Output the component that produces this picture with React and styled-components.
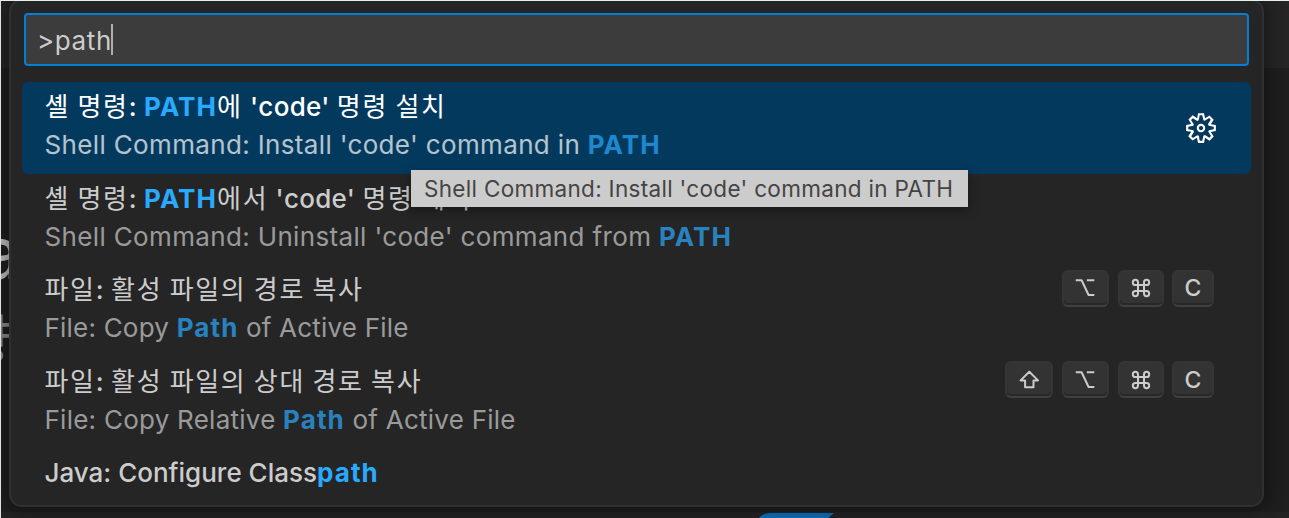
import React from 'react';
import styled, { createGlobalStyle } from 'styled-components';
import { VscGear } from 'react-icons/vsc';

const GlobalStyle = createGlobalStyle`
  * { box-sizing: border-box; }
  body { margin: 0; background: #1e1e1e; }
`;

const Workbench = styled.div`
  position: relative;
  width: 1289px;
  height: 518px;
  overflow: hidden;
  display: flex;
  flex-direction: column;
  border-top: 1px solid #e9eeee;
  border-left: 1px solid #dfe2e2;
  background: #1e1e1e;
  font-family: Inter, 'Noto Sans CJK KR', sans-serif;
  font-size: 26px;
  color: #ccc;
`;

const TabStrip = styled.div`
  height: 67px;
  background: #252526;
`;

const Editor = styled.div`
  flex: 1;
`;

const PanelEdge = styled.div`
  height: 6px;
  background: #232323;
`;

const Ribbon = styled.svg`
  position: absolute;
  left: 757px;
  top: 511px;
`;

const Behind = styled.span`
  position: absolute;
  left: ${(p) => p.$left}px;
  top: ${(p) => p.$top}px;
  font-size: ${(p) => p.$size}px;
  line-height: 1;
  color: ${(p) => p.$color};
`;

const Palette = styled.div`
  position: absolute;
  left: 8px;
  top: -2px;
  width: 1255px;
  height: 508px;
  padding: 12px 11px 0;
  display: flex;
  flex-direction: column;
  border: 2px solid #303031;
  border-radius: 13px;
  background: #252526;
  box-shadow: 0 0 16px 4px rgba(0, 0, 0, 0.36);
`;

const Query = styled.div`
  height: 53px;
  margin: 0 2px 16px;
  padding: 2px 0 0 11px;
  display: flex;
  align-items: center;
  border: 2px solid #007fd4;
  border-radius: 4px;
  background: #3c3c3c;
  letter-spacing: 0.6px;
`;

const Caret = styled.i`
  width: 2px;
  height: 31px;
  margin: -3px 0 0 -1px;
  background: #aeafad;
`;

const Row = styled.div`
  height: ${(p) => (p.$single ? 46 : 91.6)}px;
  padding: ${(p) => (p.$single ? 5.5 : 6)}px 37px 0 22.5px;
  display: flex;
  justify-content: space-between;
  border-radius: 6px;
  background: ${(p) => (p.$active ? '#04395e' : 'transparent')};
  color: ${(p) => (p.$active ? '#fff' : '#ccc')};
`;

const Labels = styled.div`
  display: flex;
  flex-direction: column;
`;

const Line = styled.div`
  height: 38px;
  line-height: 38px;
  white-space: pre;
  font-weight: ${(p) => (p.$dim ? 400 : 450)};
  opacity: ${(p) => (p.$dim ? 0.7 : 1)};
  letter-spacing: ${(p) => p.$spacing || 0}px;
`;

const Ko = styled.span`
  font-family: 'Noto Sans CJK KR', sans-serif;
  font-weight: 400;
  line-height: 0;
  letter-spacing: 1.65px;
`;

const Hit = styled.b`
  font-weight: 700;
  letter-spacing: 1.1px;
  color: #2aaaff;
`;

const Actions = styled.div`
  height: 80px;
  display: flex;
  align-items: center;
  margin-right: -4px;
`;

const Keys = styled.div`
  height: 37px;
  margin-top: -1.5px;
  display: flex;
  gap: 8.5px;
`;

const Key = styled.kbd`
  width: ${(p) => p.$w}px;
  height: 37px;
  display: flex;
  align-items: center;
  justify-content: center;
  border: 2px solid #353535;
  border-bottom-color: #404040;
  border-radius: 6px;
  background: #333;
  box-shadow: inset 0 -2px 0 #282828;
  font-family: Inter, sans-serif;
  font-size: 23px;
  font-weight: 450;
  color: #ccc;
`;

const Tooltip = styled.div`
  position: absolute;
  left: 410px;
  top: 169px;
  width: 557px;
  height: 37px;
  padding-left: 13px;
  line-height: 38px;
  font-size: 22.5px;
  letter-spacing: 0.31px;
  white-space: pre;
  color: #444;
  background: #ccc;
  box-shadow: 0 3px 10px rgba(0, 0, 0, 0.4);
`;

const Glyph = ({ children, w = 20, h = 20 }) => (
  <svg width={w} height={h} viewBox={`0 0 ${w} ${h}`} fill="none" stroke="#ccc" strokeWidth="2" strokeLinejoin="round">
    {children}
  </svg>
);

const OptionKey = () => (
  <Key $w={47.5}><Glyph><path d="M.8 2.2H6.6L13.6 17H19.3M11.8 2.2H19.3" /></Glyph></Key>
);
const CommandKey = () => (
  <Key $w={46}>
    <Glyph>
      <path d="M7 7H13V13H7ZM7 7H4.4A2.6 2.6 0 1 1 7 4.4ZM13 7V4.4A2.6 2.6 0 1 1 15.6 7ZM13 13H15.6A2.6 2.6 0 1 1 13 15.6ZM7 13V15.6A2.6 2.6 0 1 1 4.4 13Z" />
    </Glyph>
  </Key>
);
const ShiftKey = () => (
  <Key $w={48}><Glyph><path d="M10.3 1.8L19 10.4H14.5V17.2H6.1V10.4H1.6Z" /></Glyph></Key>
);
const LetterKey = ({ children }) => <Key $w={42}>{children}</Key>;

export default function App() {
  return (
    <>
      <GlobalStyle />
      <Workbench>
        <TabStrip />
        <Editor />
        <PanelEdge />
        <Behind $left={-21} $top={216} $size={72} $color="#bbb">a</Behind>
        <Behind $left={-39} $top={313} $size={54} $color="#888">향</Behind>
        <Ribbon width="76" height="7"><path d="M0 7Q5 1 12 1H76L69 7Z" fill="#0a6ebd" /></Ribbon>
        <Palette>
          <Query><span>&gt;path</span><Caret /></Query>
          <Row $active>
            <Labels>
              <Line $spacing={0.3}><Ko>셸 명령</Ko>: <Hit>PATH</Hit><Ko>에</Ko> 'code' <Ko>명령 설치</Ko></Line>
              <Line $dim $spacing={0.35}>Shell Command: Install 'code' command in <Hit>PATH</Hit></Line>
            </Labels>
            <Actions><VscGear size={34} /></Actions>
          </Row>
          <Row>
            <Labels>
              <Line $spacing={0.3}><Ko>셸 명령</Ko>: <Hit>PATH</Hit><Ko>에서</Ko> 'code' <Ko>명령 제거</Ko></Line>
              <Line $dim $spacing={0.35}>Shell Command: Uninstall 'code' command from <Hit>PATH</Hit></Line>
            </Labels>
          </Row>
          <Row>
            <Labels>
              <Line $spacing={0.3}><Ko>파일</Ko>: <Ko>활성 파일의 경로 복사</Ko></Line>
              <Line $dim $spacing={0.21}>File: Copy <Hit>Path</Hit> of Active File</Line>
            </Labels>
            <Keys><OptionKey /><CommandKey /><LetterKey>C</LetterKey></Keys>
          </Row>
          <Row>
            <Labels>
              <Line $spacing={0.3}><Ko>파일</Ko>: <Ko>활성 파일의 상대 경로 복사</Ko></Line>
              <Line $dim $spacing={0.25}>File: Copy Relative <Hit>Path</Hit> of Active File</Line>
            </Labels>
            <Keys><ShiftKey /><OptionKey /><CommandKey /><LetterKey>C</LetterKey></Keys>
          </Row>
          <Row $single>
            <Line>Java: Configure Class<Hit>path</Hit></Line>
          </Row>
        </Palette>
        <Tooltip>Shell Command: Install 'code' command in PATH</Tooltip>
      </Workbench>
    </>
  );
}
